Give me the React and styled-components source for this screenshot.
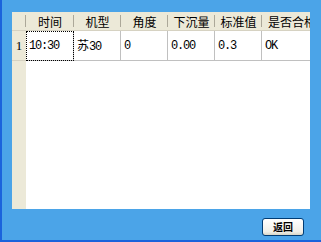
import React from 'react';
import styled, { createGlobalStyle } from 'styled-components';

const GlobalStyle = createGlobalStyle`
  html, body {
    margin: 0;
    padding: 0;
    background: #4ba4e8;
  }
  body {
    font-family: "Liberation Sans", "Noto Sans CJK SC", sans-serif;
    font-size: 12px;
  }
`;

const columns = ['时间', '机型', '角度', '下沉量', '标准值', '是否合格'];
const rows = [['10:30', '苏30', '0', '0.00', '0.3', 'OK']];
const template = '14px 48px 47px 47px 47px 47px 60px';

/**
 * Dialog window body
 */
const Window = styled.div`
  box-sizing: border-box;
  width: 321px;
  height: 242px;
  display: flex;
  flex-direction: column;
  padding: 12px 11px 0 10px;
  background: #4ba4e8;
  border-left: 2px solid #1a63dc;
  border-bottom: 2px solid #1a63dc;
`;

/**
 * Data grid
 */
const Grid = styled.div`
  height: 197px;
  display: flex;
  flex-direction: column;
  overflow: hidden;
  background: linear-gradient(to right, #ece9d8 14px, #ffffff 14px);
`;

const Row = styled.div`
  display: grid;
  grid-template-columns: ${template};
  height: ${props => props.$height}px;
  flex: none;
`;

const HeaderRow = styled(Row)`
  background: #ece9d8;
  border-bottom: 1px solid #d6d2c2;
  box-sizing: border-box;
`;

const HeaderCell = styled.div`
  position: relative;
  display: flex;
  align-items: center;
  justify-content: center;
  white-space: nowrap;
  overflow: hidden;
  color: #000;
  font-family: "Noto Sans CJK SC", sans-serif;
  font-size: 12px;
  &::after {
    content: '';
    position: absolute;
    right: 0;
    top: 3px;
    bottom: 3px;
    width: 1px;
    background: #aca899;
    box-shadow: 1px 0 0 #ffffff;
  }
`;

const RowHead = styled.div`
  display: flex;
  align-items: center;
  justify-content: center;
  background: #ece9d8;
  border-bottom: 1px solid #d6d2c2;
  font-family: "Liberation Serif", serif;
  font-size: 13px;
`;

const Cell = styled.div`
  display: flex;
  align-items: center;
  padding-left: 3px;
  white-space: nowrap;
  overflow: hidden;
  border-right: 1px solid #c0c0c0;
  border-bottom: 1px solid #c0c0c0;
  outline: ${props => (props.$focused ? '1px dotted #000' : 'none')};
  outline-offset: -1px;
`;

const Value = styled.span`
  font-family: "Liberation Mono", "Noto Sans CJK SC", monospace;
  font-size: 12px;
  letter-spacing: -1.2px;
  line-height: 14px;
`;

const Han = styled.span`
  font-family: "Noto Sans CJK SC", sans-serif;
  letter-spacing: 0;
`;

const Footer = styled.div`
  display: flex;
  justify-content: flex-end;
  padding: 9px 6px 0 0;
`;

const Button = styled.button`
  width: 42px;
  height: 18px;
  padding: 0;
  border: 1px solid #003c74;
  border-radius: 3px;
  background: linear-gradient(#ffffff, #f0efe8 80%, #d8d4c6);
  font-family: "Noto Sans CJK SC", sans-serif;
  font-size: 10px;
  font-weight: bold;
  line-height: 16px;
  color: #000;
`;

// wrap Chinese chars so they keep a full 12px width next to the mono digits
const renderValue = v =>
  v.split(/([\u4e00-\u9fff]+)/).map((part, k) =>
    /[\u4e00-\u9fff]/.test(part) ? <Han key={k}>{part}</Han> : part
  );

export default function App() {
  return (
    <>
      <GlobalStyle />
      <Window>
        <Grid>
          <HeaderRow $height={19}>
            <HeaderCell />
            {columns.map(c => (
              <HeaderCell key={c}>{c}</HeaderCell>
            ))}
          </HeaderRow>
          {rows.map((r, i) => (
            <Row key={i} $height={30}>
              <RowHead>{i + 1}</RowHead>
              {r.map((v, j) => (
                <Cell key={j} $focused={j === 0}>
                  <Value>{renderValue(v)}</Value>
                </Cell>
              ))}
            </Row>
          ))}
        </Grid>
        <Footer>
          <Button>返回</Button>
        </Footer>
      </Window>
    </>
  );
}
